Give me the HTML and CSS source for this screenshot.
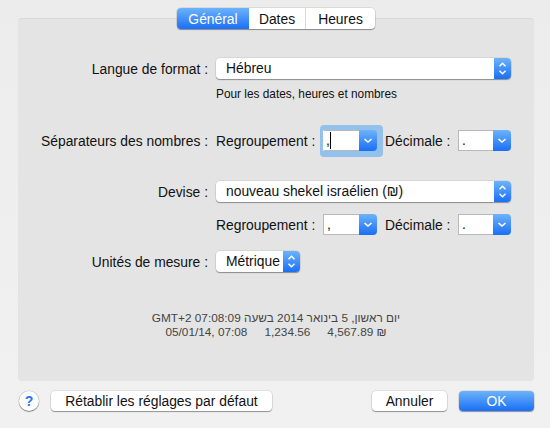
FILE: index.html
```html
<!DOCTYPE html>
<html lang="fr">
<head>
<meta charset="utf-8">
<title>Langue et région</title>
<link rel="stylesheet" href="styles.css">
</head>
<body>
<svg class="defs" width="0" height="0" aria-hidden="true">
  <symbol id="updown" viewBox="0 0 17 21"><path d="M5.5 8.2 8.5 5.2 11.5 8.2M5.5 12.8 8.5 15.8 11.5 12.8" fill="none" stroke="#fff" stroke-width="1.5"/></symbol>
  <symbol id="down" viewBox="0 0 18 21"><path d="M5.5 9 9 12 12.5 9" fill="none" stroke="#fff" stroke-width="1.6"/></symbol>
</svg>
<nav class="tabs">
  <div class="tab tab-general active">Général</div>
  <div class="tab tab-dates">Dates</div>
  <div class="tab tab-heures">Heures</div>
</nav>
<main class="panel">
  <div class="row row-langue">
    <div class="label">Langue de format :</div>
    <div class="popup wide"><span class="value">Hébreu</span><span class="stepper"><svg width="17" height="21"><use href="#updown"/></svg></span></div>
  </div>
  <div class="row row-hint">
    <div class="label"></div>
    <div class="hint">Pour les dates, heures et nombres</div>
  </div>
  <div class="row row-sep">
    <div class="label">Séparateurs des nombres :</div>
    <div class="sublabel first">Regroupement :</div>
    <div class="combo combo-group focused"><span class="entry">,<i class="caret"></i></span><span class="drop"><svg width="18" height="21"><use href="#down"/></svg></span></div>
    <div class="sublabel second">Décimale :</div>
    <div class="combo"><span class="entry">.</span><span class="drop"><svg width="18" height="21"><use href="#down"/></svg></span></div>
  </div>
  <div class="row row-devise">
    <div class="label">Devise :</div>
    <div class="popup wide"><span class="value">nouveau shekel israélien (₪)</span><span class="stepper"><svg width="17" height="21"><use href="#updown"/></svg></span></div>
  </div>
  <div class="row row-sep2">
    <div class="label"></div>
    <div class="sublabel first">Regroupement :</div>
    <div class="combo combo-group"><span class="entry">,</span><span class="drop"><svg width="18" height="21"><use href="#down"/></svg></span></div>
    <div class="sublabel second">Décimale :</div>
    <div class="combo"><span class="entry">.</span><span class="drop"><svg width="18" height="21"><use href="#down"/></svg></span></div>
  </div>
  <div class="row row-unites">
    <div class="label">Unités de mesure :</div>
    <div class="popup narrow"><span class="value">Métrique</span><span class="stepper"><svg width="17" height="21"><use href="#updown"/></svg></span></div>
  </div>
  <div class="sample">
    <div dir="rtl">יום ראשון, 5 בינואר 2014 בשעה 07:08:09 GMT+2</div>
    <div class="sample-line"><span>05/01/14, 07:08</span><span>1,234.56</span><span dir="ltr">4,567.89 ₪</span></div>
  </div>
</main>
<footer class="footer">
  <button class="help" type="button">?</button>
  <button class="btn reset" type="button">Rétablir les réglages par défaut</button>
  <button class="btn cancel" type="button">Annuler</button>
  <button class="btn ok" type="button">OK</button>
</footer>
</body>
</html>
```
FILE: styles.css
```css
* { box-sizing: border-box; }
html, body { margin: 0; height: 100%; }
body {
  width: 550px;
  height: 428px;
  overflow: hidden;
  padding: 8px 16px 0 18px;
  background: linear-gradient(#ececec, #f1f1f1);
  font: 13.85px "Liberation Sans", Arial, sans-serif;
  color: #111;
}
.defs { position: absolute; }
.tabs {
  position: relative;
  z-index: 1;
  display: flex;
  width: 198px;
  height: 21px;
  margin: 0 auto -11px;
  background: #fff;
  border-radius: 4px;
  box-shadow: 0 1px 1px rgba(0, 0, 0, .35), 0 0 0 .5px rgba(0, 0, 0, .15);
}
.tab { display: flex; align-items: center; justify-content: center; }
.tab-general { width: 72px; }
.tab-dates { width: 57px; border-right: 1px solid #d8d8d8; }
.tab-heures { width: 69px; }
.active {
  color: #fff;
  background: linear-gradient(#6cb3fa, #1a6ff7);
  border-radius: 4px 0 0 4px;
}
.panel {
  height: 363px;
  padding-top: 39px;
  background: #e4e4e4;
  border-top: 1px solid #d8d8d8;
  border-radius: 4px;
}
.row { display: flex; align-items: center; height: 21px; }
.label { flex: none; width: 190px; margin-right: 8px; text-align: right; white-space: nowrap; }
.row-hint { height: 14px; margin-top: 8px; }
.row-sep { margin-top: 29px; }
.row-devise { margin-top: 30px; }
.row-sep2 { margin-top: 12px; }
.row-unites { margin-top: 16px; }
.hint { font-size: 11.85px; white-space: nowrap; }
.popup {
  display: flex;
  height: 21px;
  background: #fff;
  border-radius: 4px;
  box-shadow: 0 1px 1px rgba(0, 0, 0, .35), 0 0 0 .5px rgba(0, 0, 0, .12);
}
.wide { width: 295px; }
.narrow { width: 84px; }
.value { flex: 1; padding: 0 0 0 10px; line-height: 20px; white-space: nowrap; }
.stepper {
  flex: none;
  width: 17px;
  background: linear-gradient(#6cb3fa, #1a6ff7);
  border-radius: 0 4px 4px 0;
}
.stepper svg, .drop svg { display: block; }
.sublabel { flex: none; white-space: nowrap; }
.first { width: 107px; }
.second { width: 73px; margin-left: 8px; }
.combo { display: flex; flex: none; width: 53px; height: 21px; }
.combo-group { width: 54px; }
.entry {
  position: relative;
  flex: 1;
  padding-left: 3px;
  line-height: 19px;
  background: #fff;
  border: 1px solid #b9b9b9;
  border-right: 0;
}
.drop {
  flex: none;
  width: 18px;
  background: linear-gradient(#6cb3fa, #1a6ff7);
  border-radius: 0 4px 4px 0;
}
.focused { position: relative; isolation: isolate; }
.focused::before {
  content: "";
  position: absolute;
  inset: -5px -6px -6px -3px;
  z-index: -1;
  border-radius: 4px;
  background: #93c1ec;
}
.focused .entry { border-left-color: #fff; padding-left: 2px; }
.caret {
  position: absolute;
  left: 6px;
  top: 1px;
  width: 1px;
  height: 17px;
  background: #000;
}
.sample { margin-top: 39px; text-align: center; font-size: 11.8px; line-height: 14px; color: #444; }
.sample-line { display: flex; justify-content: center; gap: 17px; }
.footer { display: flex; align-items: center; height: 20px; margin-top: 10px; }
.help {
  flex: none;
  width: 20px;
  height: 20px;
  margin-left: 1px;
  padding: 0;
  border: 0;
  border-radius: 50%;
  background: #fff;
  box-shadow: 0 1px 1px rgba(0, 0, 0, .35), 0 0 0 .5px rgba(0, 0, 0, .2);
  color: #1e78f0;
  font: bold 14px "Liberation Sans", Arial, sans-serif;
}
.btn {
  height: 20px;
  padding: 0;
  border: 0;
  border-radius: 4px;
  background: #fff;
  box-shadow: 0 1px 1px rgba(0, 0, 0, .35), 0 0 0 .5px rgba(0, 0, 0, .15);
  color: #111;
  font: 13.85px "Liberation Sans", Arial, sans-serif;
}
.reset { width: 221px; margin-left: 12px; }
.cancel { width: 75px; margin-left: 100px; }
.ok {
  width: 75px;
  margin-left: 12px;
  color: #fff;
  background: linear-gradient(#6cb3fa, #1a6ff7);
}
```
